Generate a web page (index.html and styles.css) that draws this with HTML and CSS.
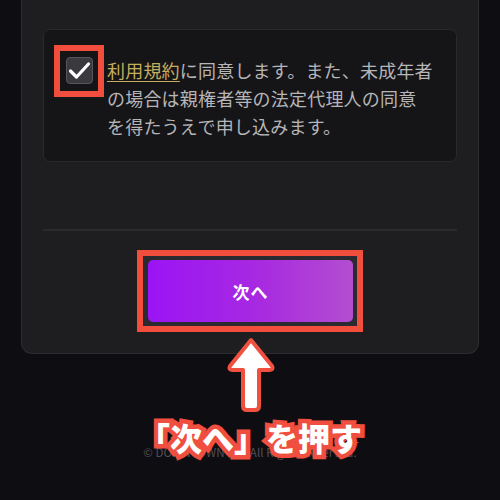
FILE: index.html
```html
<!DOCTYPE html>
<html lang="ja">
<head>
<meta charset="utf-8">
<link rel="stylesheet" href="styles.css">
</head>
<body>
<div class="page">
  <div class="card">
    <div class="agree-box">
      <div class="hl hl-check">
        <span class="checkbox">
          <svg width="23" height="19" viewBox="0 0 23 19"><path d="M2.5 10 L8.5 16 L20.5 3" fill="none" stroke="#fff" stroke-width="3.2" stroke-linecap="round" stroke-linejoin="round"/></svg>
        </span>
      </div>
      <p class="agree-text"><a class="terms">利用規約</a>に同意します。また、未成年者の場合は親権者等の法定代理人の同意<br>を得たうえで申し込みます。</p>
    </div>
    <div class="divider"></div>
    <div class="btn-row">
      <div class="hl hl-btn">
        <button class="next-btn">次へ</button>
      </div>
    </div>
  </div>
  <p class="footer">© DOWNTOWN Inc. All Rights Reserved.</p>
  <svg class="arrow" width="60" height="80" viewBox="0 0 60 80"><path d="M30 4 L51 30 Q53 34 48 34 L38 34 L38 70 Q38 74 34 74 L26 74 Q22 74 22 70 L22 34 L12 34 Q7 34 9 30 Z" fill="#fff" stroke="#f05040" stroke-width="4" stroke-linejoin="round"/></svg>
  <p class="callout">「次へ」を押す</p>
</div>
</body>
</html>
```
FILE: styles.css
```css
* { box-sizing: border-box; }
html, body { margin: 0; padding: 0; }
body {
  background: #0e0d12;
  font-family: "Noto Sans CJK JP", "Noto Sans", sans-serif;
  width: 500px;
  height: 500px;
  overflow: hidden;
}
.page {
  position: relative;
  padding: 0 21px;
  height: 500px;
}
.card {
  background: #1e1e20;
  border: 1px solid #2c2b2f;
  border-top: none;
  border-radius: 0 0 11px 11px;
  padding: 29px 21px 21px;
}
.agree-box {
  background: #151417;
  border: 1px solid #2a292d;
  border-radius: 7px;
  padding: 15px 10px 20px;
  display: flex;
  align-items: flex-start;
  gap: 3px;
  height: 133px;
}
.hl {
  border: 6px solid #f24e3d;
}
.hl-check {
  width: 50px;
  height: 52px;
  padding: 6px 0 0 6px;
  flex: none;
}
.checkbox {
  display: flex;
  align-items: center;
  justify-content: center;
  width: 27px;
  height: 27px;
  background: #3a393e;
  border: 1px solid #56555b;
  border-radius: 4px;
}
.agree-text {
  margin: 11px 0 0;
  width: 340px;
  font-size: 18px;
  line-height: 28px;
  letter-spacing: 0.2px;
  color: #b6b5b8;
}
.terms {
  color: #c5ad5c;
  text-decoration: underline;
  text-underline-offset: 3px;
}
.divider {
  height: 2px;
  background: #2b2a2e;
  margin: 67px 0 19px;
}
.btn-row {
  display: flex;
  justify-content: center;
}
.hl-btn {
  width: 226px;
  height: 82px;
  padding: 4px 4px 4px 5px;
  background: #2b2a31;
}
.next-btn {
  display: block;
  width: 100%;
  height: 100%;
  border: none;
  border-radius: 5px;
  background: linear-gradient(90deg, #9a14f5 0%, #a82ae0 55%, #b34ed0 100%);
  color: #fff;
  font-family: "Noto Sans CJK JP", sans-serif;
  font-weight: 700;
  font-size: 17px;
  letter-spacing: 1px;
  padding: 0;
}
.footer {
  margin: 90px 0 0;
  text-align: center;
  color: #525157;
  font-size: 11.5px;
  letter-spacing: 0.1px;
}
.arrow {
  position: absolute;
  left: 221px;
  top: 336px;
}
.callout {
  position: absolute;
  left: 0;
  right: 0;
  top: 414px;
  margin: 0;
  text-align: center;
  font-size: 32px;
  font-weight: 900;
  line-height: 46px;
  color: #fff;
  -webkit-text-stroke: 9px #f04e3e;
  paint-order: stroke fill;
}
```
